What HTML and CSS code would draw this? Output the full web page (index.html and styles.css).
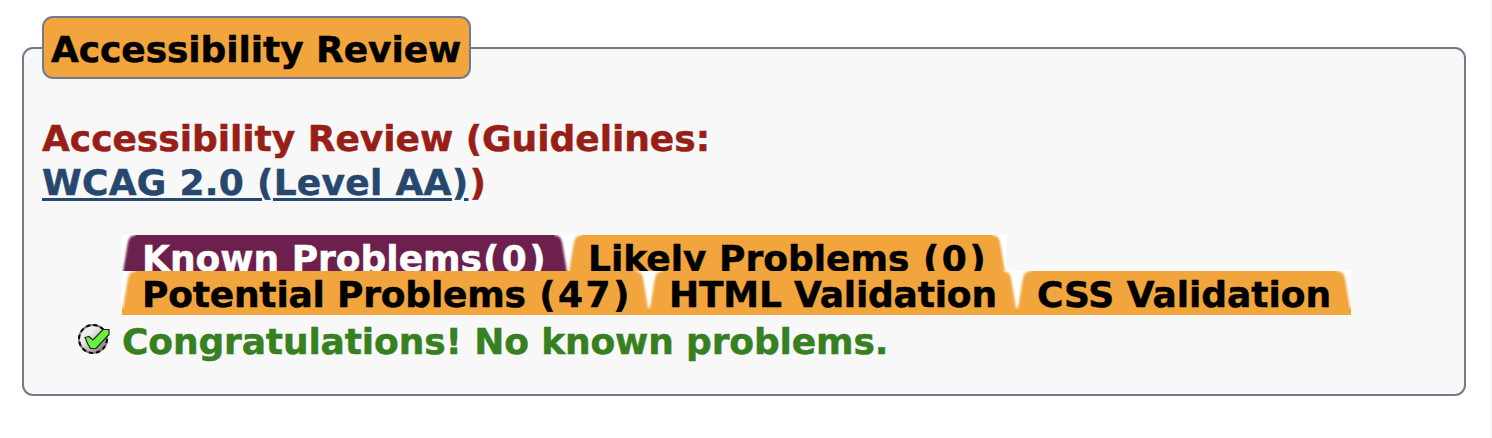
FILE: index.html
```html
<!DOCTYPE html>
<html lang="en">
<head>
<meta charset="utf-8">
<title>Accessibility Review</title>
<link rel="stylesheet" href="styles.css">
</head>
<body>
<svg class="defs" width="0" height="0" aria-hidden="true">
  <defs>
    <filter id="soft" x="-20%" y="-5%" width="140%" height="110%"><feGaussianBlur stdDeviation="0.8"/></filter>
    <symbol id="corner" viewBox="0 0 14 44"><path d="M-4-4H14V.3C8 .3 6.500 4 5.500 10L1 37H-4Z" fill="#fff" filter="url(#soft)"/></symbol>
  </defs>
</svg>
<section class="review">
  <div class="legend"><span class="legend-text">Accessibility Review</span></div>
  <h3 class="heading"><span class="guidelines">Accessibility Review (Guidelines:</span><br><a class="level" href="#">WCAG 2.0 (Level AA)</a><span class="close">)</span></h3>
  <nav class="tabs">
    <div class="row row-top">
      <a class="tab tab-known active"><svg class="edge left"><use href="#corner"/></svg><span>Known Problems<span class="count">(0)</span></span><svg class="edge right"><use href="#corner"/></svg></a>
      <a class="tab tab-likely"><svg class="edge left"><use href="#corner"/></svg><span>Likely Problems <span class="count">(0)</span></span><svg class="edge right"><use href="#corner"/></svg></a>
    </div>
    <div class="row">
      <a class="tab tab-potential"><svg class="edge left"><use href="#corner"/></svg><span>Potential Problems <span class="count">(47)</span></span><svg class="edge right"><use href="#corner"/></svg></a>
      <a class="tab tab-html"><svg class="edge left"><use href="#corner"/></svg><span>HTML Validation</span><svg class="edge right"><use href="#corner"/></svg></a>
      <a class="tab tab-css"><svg class="edge left"><use href="#corner"/></svg><span>CSS Validation</span><svg class="edge right"><use href="#corner"/></svg></a>
    </div>
  </nav>
  <div class="result">
    <svg class="check" viewBox="0 0 32 32">
      <defs><linearGradient id="disc" x1="0" y1="0" x2="1" y2="1"><stop offset=".35" stop-color="#eee"/><stop offset="1" stop-color="#666"/></linearGradient></defs>
      <circle cx="15" cy="15" r="14" fill="url(#disc)" stroke="#777" stroke-width="2"/>
      <circle cx="15" cy="15" r="14" fill="none" stroke="#000" stroke-width="2" stroke-dasharray="4 3.330"/>
      <path d="M7 13.500L11 12.500L15 16L25 5.500H31V10.500L18 24.500H12.500L9.500 19.500Z" fill="#66f23c" stroke="#222" stroke-width="1.200"/>
    </svg>
    <span class="success">Congratulations! No known problems.</span>
  </div>
</section>
</body>
</html>
```
FILE: styles.css
```css
* { box-sizing: border-box; }
html { background: #fff; }
body {
  margin: 0;
  height: 438px;
  overflow: hidden;
  padding: 47px 25px 0 22px;
  border-right: 1px solid #f2f2f2;
  font: bold 36px/44px Verdana, "DejaVu Sans", sans-serif;
  -webkit-text-stroke: 0.5px currentColor;
}
.defs { position: absolute; }
.review {
  width: 1444px;
  height: 349px;
  padding: 0 18px;
  border: 2px solid #6f7b8e;
  border-radius: 11px;
  background: #f8f8f8;
  white-space: nowrap;
}
.legend {
  width: 429px;
  height: 63px;
  margin-top: -33px;
  padding: 10px 7px;
  border: 2px solid #6f7b8e;
  border-radius: 11px;
  background: #f2a53d;
  color: #000;
  letter-spacing: -0.08px;
}
.heading {
  margin: 38px 0 0;
  font-size: 36px;
  line-height: 44px;
  color: #971f17;
}
.guidelines { letter-spacing: -0.03px; }
.level {
  color: #26486f;
  letter-spacing: 0.28px;
  text-decoration-thickness: 3px;
  text-underline-offset: 3px;
}
.close { margin-left: 1px; }
.tabs { margin: 30px 0 0 80px; }
.row { display: flex; height: 44px; }
.row-top { height: 36px; overflow: hidden; }
.tab {
  position: relative;
  flex: none;
  height: 44px;
  padding: 2px 0 0 20px;
  overflow: hidden;
  background: #f2a53d;
  color: #000;
}
.active { background: #6d1f4e; color: #fff; }
.tab-known { width: 446px; }
.tab-likely { width: 438px; }
.tab-potential { width: 527px; letter-spacing: -0.2px; }
.tab-html { width: 368px; letter-spacing: -0.2px; }
.tab-css { width: 334px; letter-spacing: -0.05px; }
.count { margin-left: 1px; letter-spacing: 2.4px; }
.edge { position: absolute; top: 0; width: 14px; height: 44px; }
.left { left: 0; }
.right { right: 0; transform: scaleX(-1); }
.result { display: flex; margin: 5px 0 0 36px; }
.check { width: 32px; height: 32px; margin: 4px 12px 0 0; }
.success { color: #37801f; letter-spacing: -0.13px; }
```
